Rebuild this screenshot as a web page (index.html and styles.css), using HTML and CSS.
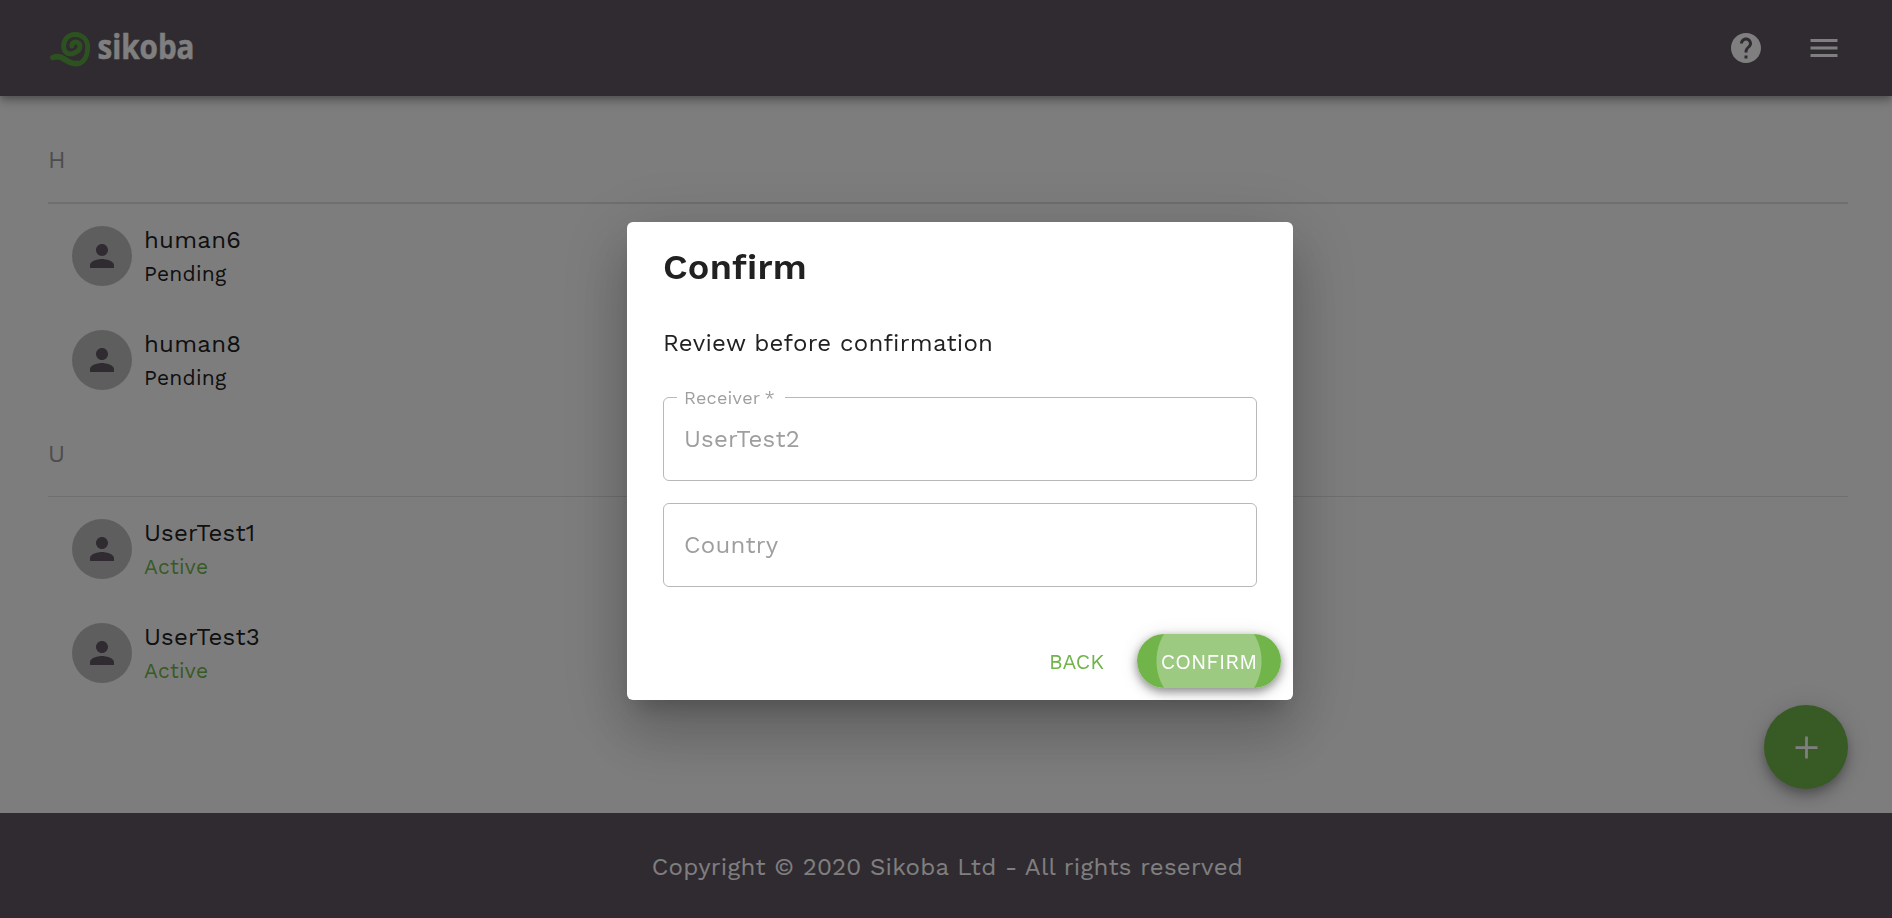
FILE: index.html
```html
<!DOCTYPE html>
<html lang="en">
<head>
<meta charset="utf-8">
<title>Sikoba</title>
<link rel="stylesheet" href="styles.css">
</head>
<body>
<svg width="0" height="0" class="defs">
  <symbol id="person" viewBox="0 0 24 24"><path d="M12 12c2.21 0 4-1.79 4-4s-1.79-4-4-4-4 1.79-4 4 1.79 4 4 4zm0 2c-2.67 0-8 1.34-8 4v2h16v-2c0-2.66-5.33-4-8-4z"/></symbol>
</svg>
<div class="page">
  <header class="topbar">
    <svg class="logo" width="170" height="60" viewBox="0 0 170 60">
      <path class="snail" d="M15.700 28C15.700 36 22 37 26.300 35C32 33 33.500 28 30.500 25C27.500 22.500 24 24.500 23.700 28"/>
      <path class="snail" d="M15.700 28C15.500 22 20 16.500 27 16.300C34 16.500 39.700 21 39.700 29.300C39.700 39 35 46.300 28 45.800C20 45.500 16.500 38.500 10.300 38.800"/>
      <path class="snail tail" d="M5 39.500C13 36.500 16 42 21 44C24 45.400 27 45.800 29 45.300"/>
      <text class="wordmark" x="49.500" y="41" textLength="97" lengthAdjust="spacingAndGlyphs">sikoba</text>
    </svg>
    <div class="actions">
      <svg width="36" height="36" viewBox="0 0 24 24"><path d="M12 2C6.480 2 2 6.480 2 12s4.480 10 10 10 10-4.480 10-10S17.520 2 12 2zm1 17h-2v-2h2v2zm2.070-7.750l-.9.920C13.450 12.900 13 13.500 13 15h-2v-.5c0-1.100.45-2.100 1.170-2.830l1.240-1.260c.37-.36.59-.86.59-1.410 0-1.100-.9-2-2-2s-2 .9-2 2H8c0-2.210 1.790-4 4-4s4 1.790 4 4c0 .88-.36 1.680-.93 2.250z"/></svg>
      <svg width="36" height="36" viewBox="0 0 24 24"><path d="M3 18h18v-2H3v2zm0-5h18v-2H3v2zm0-7v2h18V6H3z"/></svg>
    </div>
  </header>
  <main class="contacts">
    <section class="group">
      <h2 class="letter">H</h2>
      <div class="contact"><span class="avatar"><svg width="36" height="36"><use href="#person"/></svg></span><div><div class="name">human6</div><div class="status">Pending</div></div></div>
      <div class="contact"><span class="avatar"><svg width="36" height="36"><use href="#person"/></svg></span><div><div class="name">human8</div><div class="status">Pending</div></div></div>
    </section>
    <section class="group second">
      <h2 class="letter">U</h2>
      <div class="contact"><span class="avatar"><svg width="36" height="36"><use href="#person"/></svg></span><div><div class="name">UserTest1</div><div class="status active">Active</div></div></div>
      <div class="contact"><span class="avatar"><svg width="36" height="36"><use href="#person"/></svg></span><div><div class="name">UserTest3</div><div class="status active">Active</div></div></div>
    </section>
  </main>
  <button class="fab" aria-label="Add"><svg width="33" height="33" viewBox="0 0 24 24"><path d="M20 13h-7v7h-2v-7H4v-2h7V4h2v7h7v2z"/></svg></button>
  <footer class="footer"><span class="copyright">Copyright © 2020 Sikoba Ltd - All rights reserved</span></footer>
</div>
<div class="backdrop">
  <div class="dialog" role="dialog">
    <h1 class="title"><span>Confirm</span></h1>
    <p class="review"><span>Review before confirmation</span></p>
    <div class="field"><span class="label">Receiver<span class="required">*</span></span><span class="value">UserTest2</span></div>
    <div class="field"><span class="country">Country</span></div>
    <div class="buttons">
      <button class="back"><span>BACK</span></button>
      <button class="confirm"><span>CONFIRM</span></button>
    </div>
  </div>
</div>
</body>
</html>
```
FILE: styles.css
```css
* { box-sizing: border-box; }
body { margin: 0; font-family: "Work Sans", Inter, sans-serif; font-weight: 400; font-size: 24px; letter-spacing: .26px; color: #212121; overflow: hidden; }
button { border: 0; padding: 0; font: inherit; letter-spacing: inherit; }
.defs { position: absolute; }
.page { height: 918px; display: flex; flex-direction: column; background: #fafafa; }
.topbar { height: 96px; flex: none; padding: 0 50px 0 48px; display: flex; align-items: center; justify-content: space-between; background: #605662; position: relative; box-shadow: 0 3px 6px -1px rgba(0,0,0,.2), 0 6px 8px rgba(0,0,0,.14), 0 2px 15px rgba(0,0,0,.12); }
.snail { fill: none; stroke: #58a63e; stroke-width: 4.800px; stroke-linecap: round; stroke-linejoin: round; }
.tail { stroke-width: 5.600px; }
.wordmark { font: 700 34.500px "Open Sans", sans-serif; fill: #fff; stroke: #fff; stroke-width: .5px; stroke-linejoin: round; letter-spacing: 0; }
.actions { display: flex; gap: 42px; fill: #fff; }
.contacts { flex: 1; padding: 0 44px 0 48px; }
.letter { margin: 0; height: 108px; padding: 48px 0 0; font-size: 24px; line-height: 32px; font-weight: 400; color: #9a9a9a; border-bottom: 2px solid #dedede; }
.second .letter { height: 85px; padding-top: 26px; border-bottom-width: 1px; }
.contact { height: 104px; padding: 22px 0 0 24px; display: flex; gap: 12px; }
.avatar { width: 60px; height: 60px; border-radius: 50%; background: #bdbdbd; display: flex; align-items: center; justify-content: center; fill: #605662; }
.name { width: max-content; line-height: 36px; margin-top: -4px; }
.status { width: max-content; font-size: 21px; line-height: 31px; }
.active { color: #70b44a; }
.fab { position: absolute; left: 1764px; top: 705px; width: 84px; height: 84px; border-radius: 50%; background: #70b44a; display: flex; align-items: center; justify-content: center; fill: #fff; box-shadow: 0 5px 8px -1px rgba(0,0,0,.2), 0 9px 15px rgba(0,0,0,.14), 0 2px 27px rgba(0,0,0,.12); }
.footer { height: 105px; flex: none; padding-top: 37px; text-align: center; line-height: 34px; color: #fff; background: #605662; }
.copyright { margin-left: 3px; }
.backdrop { position: fixed; inset: 0; z-index: 2; background: rgba(0,0,0,.5); padding: 222px 0 0 627px; }
.dialog { width: 666px; height: 478px; padding: 0 36px; border-radius: 6px; background: #fff; box-shadow: 0 16px 22px -10px rgba(0,0,0,.2), 0 36px 57px 4px rgba(0,0,0,.14), 0 13px 69px 12px rgba(0,0,0,.12); }
.title { margin: 0; height: 101px; padding-top: 23px; font-size: 36px; line-height: 44px; font-weight: 600; }
.review { margin: 0; height: 74px; line-height: 40px; letter-spacing: .29px; }
.field { height: 84px; margin-bottom: 22px; padding: 0 20px; border: 1px solid #b8b8b8; border-radius: 6px; line-height: 83px; position: relative; color: #9e9e9e; }
.label { position: absolute; left: 13px; top: -12px; width: 108px; padding-left: 7px; background: #fff; font-size: 18px; line-height: 24px; white-space: nowrap; }
.required { margin-left: 4px; }
.buttons { display: flex; justify-content: flex-end; margin: 47px -24px 0 0; height: 54px; gap: 33px; font-size: 21px; letter-spacing: 0; }
.back { background: none; color: #70b44a; }
.confirm { width: 144px; border-radius: 27px; color: #fff; background: radial-gradient(circle, #9bca80 52px, #70b44a 53px); box-shadow: 0 3px 8px rgba(0,0,0,.3), 0 5px 12px rgba(0,0,0,.14), 0 2px 20px rgba(0,0,0,.12); }
```
